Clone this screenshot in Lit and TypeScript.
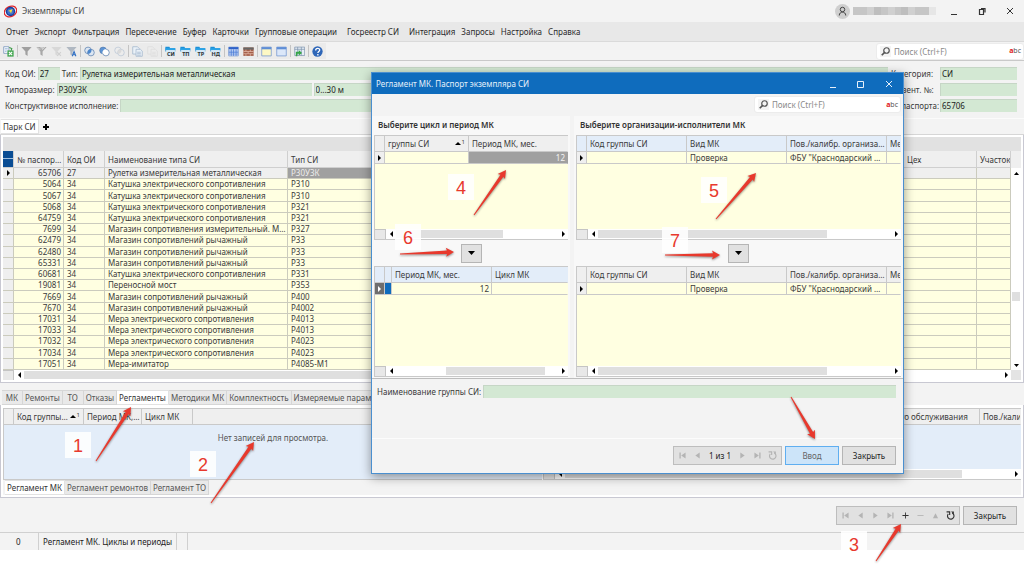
import { LitElement, html, svg, css, nothing, TemplateResult } from "lit";
import { customElement, property } from "lit/decorators.js";
import { classMap } from "lit/directives/class-map.js";
import { styleMap } from "lit/directives/style-map.js";

const base = css`
  *, *::before, *::after { box-sizing: border-box; }
  button, input {
    font: inherit;
    color: inherit;
    border: 0;
    margin: 0;
    padding: 0;
    background: none;
    border-radius: 0;
    min-width: 0;
  }
  svg { display: block; }
`;

/* ---------- glyphs ---------- */

const funnel = (fill: string) => svg`<path d="M1 3h28L18 15v12l-6-4v-8z" fill=${fill}/>`;
const folder = (text: string) => svg`
  <path d="M1 2h11l2 4h14v9H1z" fill="#1d8fd6"/><path d="M3 9h24v19H3z" fill="#d5e9f6"/>
  <path d="M1 6h27v5H1z" fill="#2aa3e6"/>
  <text x="16" y="28" text-anchor="middle" font-size="15" font-weight="700" fill="#333">${text}</text>`;
const sheet = (fill: string, bar: string) => svg`
  <path d="M2 3h26v24H2z" fill=${fill} stroke="#6f93cf" stroke-width="2"/><path d="M2 3h26v6H2z" fill=${bar}/>`;
const rings = (a: string, b: string, mid: string) => svg`
  <circle cx="11" cy="12" r="9" fill=${a} stroke="#5a7fae" stroke-width="2"/>
  <circle cx="19" cy="18" r="9" fill=${b} stroke="#5a7fae" stroke-width="2"/>
  <path d="M20 9a9 9 0 0 0-10 12a9 9 0 0 0 10-12z" fill=${mid}/>`;
const pages = (fill: string, line: string) => svg`
  <path d="M2 2h13l5 5v15H2z" fill=${fill} stroke=${line} stroke-width="2"/>
  <path d="M11 9h12l5 5v14H11z" fill=${fill} stroke=${line} stroke-width="2"/>
  <path d="M14 17h10M14 21h10M14 25h10" stroke=${line} stroke-width="2"/>`;

const toolGroups: { title: string; art: TemplateResult<2> }[][] = [
  [{ title: "Экспорт", art: svg`
      <path d="M2 2h14v18H2z" fill="#fff" stroke="#6b8cb5" stroke-width="2"/><path d="M5 7h8M5 11h8M5 15h5" stroke="#8fb0d8" stroke-width="2"/>
      <path d="M17 4l7 3-2 6" fill="none" stroke="#3b9a46" stroke-width="3"/>
      <path d="M12 12h17v17H12z" fill="#43a651"/><path d="M16 16l9 9M25 16l-9 9" stroke="#fff" stroke-width="3"/>` }],
  [
    { title: "Фильтр", art: funnel("#a0a0a0") },
    { title: "Мультифильтр", art: svg`${funnel("#a8a8a8")}<path d="M5 4l6 6M16 10l8-7M12 5h8" stroke="#f4f4f4" stroke-width="2"/>` },
    { title: "Снять фильтр", art: svg`${funnel("#d8d8d8")}<path d="M17 17l10 10M27 17L17 27" stroke="#cfcfcf" stroke-width="3"/>` },
    { title: "Автофильтр", art: svg`${funnel("#b0b8c2")}<path d="M17 28l5-13 5 13M19 24h6" fill="none" stroke="#2f6fc4" stroke-width="3"/>` },
  ],
  [
    { title: "Пересечение", art: rings("#dce6f2", "#dce6f2", "#4b86cc") },
    { title: "Разность", art: rings("#5c94d6", "#ffffff", "#ffffff") },
    { title: "Сброс", art: svg`<g opacity=".35">${rings("#eeeeee", "#eeeeee", "#bbbbbb")}</g>` },
  ],
  [
    { title: "Копировать", art: pages("#eaf1f8", "#9fb4cb") },
    { title: "Вставить", art: pages("#ececec", "#dcdcdc") },
  ],
  [
    { title: "СИ", art: folder("СИ") },
    { title: "ТП", art: folder("ТП") },
    { title: "ТР", art: folder("ТР") },
    { title: "НД", art: folder("НД") },
  ],
  [
    { title: "Таблица", art: svg`${sheet("#dfe9fb", "#2f62c8")}<path d="M2 14h26M2 18h26M2 22h26M9 9v18M15 9v18M22 9v18" stroke="#4a7bd6" stroke-width="2"/>` },
    { title: "Журнал", art: svg`<path d="M1 4h28v23H1z" fill="#a5604b"/><path d="M1 4h28v6H1z" fill="#666"/><path d="M1 15h28M1 21h28M8 10v5M20 10v5M14 15v6M8 21v6M20 21v6" stroke="#e4b9a9" stroke-width="2"/>` },
  ],
  [
    { title: "Карточка", art: sheet("#fdf8c4", "#5f8ed6") },
    { title: "Форма", art: sheet("#dbe7f9", "#5f8ed6") },
  ],
  [{ title: "Переход", art: svg`<path d="M2 3h27v23H2z" fill="#e6eef6" stroke="#7d93ad" stroke-width="2"/><path d="M2 9h27M10 3v23M20 3v23" stroke="#7d93ad" stroke-width="2"/><path d="M5 28V16h8v-5l9 8-9 7v-5H9v7z" fill="#35a547"/>` }],
  [{ title: "Помощь", art: svg`<circle cx="15" cy="15" r="14" fill="#2e66b8"/><path d="M10 12c0-7 11-7 11-1 0 4-5 4-5 8M16 22v4" fill="none" stroke="#fff" stroke-width="3.5"/>` }],
];

const navArt: Record<string, TemplateResult<2>> = {
  first: svg`<path d="M1 1h3v14H1zM15 1v14L5 8z"/>`,
  prev: svg`<path d="M13 1v14L3 8z"/>`,
  next: svg`<path d="M3 1v14l10-7z"/>`,
  last: svg`<path d="M12 1h3v14h-3zM1 1v14l10-7z"/>`,
  add: svg`<path d="M7 1h2v6h6v2H9v6H7V9H1V7h6z"/>`,
  remove: svg`<path d="M1 7h14v2H1z"/>`,
  edit: svg`<path d="M2 14h12L8 3z"/>`,
  refresh: svg`<path d="M4 5a5.800 5.800 0 1 0 7-1.500M1 1.500h5.500V7" fill="none" stroke="currentColor" stroke-width="2"/><path d="M9 1h5v5z"/>`,
};
const navTitle: Record<string, string> = {
  first: "Первая", prev: "Предыдущая", next: "Следующая", last: "Последняя",
  add: "Добавить", remove: "Удалить", edit: "Изменить", refresh: "Обновить",
};

/* ---------- search box ---------- */

@customElement("search-box")
export class SearchBox extends LitElement {
  static styles = [base, css`
    :host {
      display: flex; align-items: center; gap: 3px; height: 17px; padding: 0 2px 0 3px;
      background: #fff; border-radius: 3px; border: 1px solid #ececec;
    }
    .lens { width: 11px; height: 11px; background: #f4f4f4; padding: 1px; flex: none; }
    .field { flex: 1; outline: 0; height: 13px; }
    .field::placeholder { color: #8a8a8a; opacity: 1; }
    .abc { font-size: 7px; color: #555; }
    .abc b { color: #e02020; }
  `];
  render() {
    return html`
      <svg class="lens" viewBox="0 0 18 18"><circle cx="11" cy="7" r="5.500" fill="none" stroke="#555" stroke-width="2.400"/><path d="M7.500 10.500L1.500 16.500" stroke="#555" stroke-width="3.500"/></svg>
      <input class="field" type="search" aria-label="Поиск" placeholder="Поиск (Ctrl+F)">
      <span class="abc"><b>a</b>bc</span>`;
  }
}

/* ---------- record navigator ---------- */

@customElement("record-nav")
export class RecordNav extends LitElement {
  @property({ attribute: false }) items: string[] = [];
  @property({ attribute: false }) enabled: string[] = [];
  @property() counter = "";
  static styles = [base, css`
    :host {
      display: flex; align-items: center; height: 19px; padding: 0 1px;
      background: #e1e1e1; border: 1px solid #bdbdbd;
    }
    .btn { width: 15px; height: 17px; display: grid; place-items: center; color: #b4b4b4; }
    .btn.on { color: #333; }
    .btn svg { width: 7px; height: 7px; fill: currentColor; }
    .btn.big svg { width: 9px; height: 9px; }
    .count { width: 30px; text-align: center; color: #222; }
  `];
  render() {
    return this.items.map((id) =>
      id === "count"
        ? html`<span class="count">${this.counter}</span>`
        : html`<button
            class=${classMap({ btn: true, on: this.enabled.includes(id), big: id === "refresh" })}
            aria-label=${navTitle[id]}
            ?disabled=${!this.enabled.includes(id)}
          ><svg viewBox="0 0 16 16">${navArt[id]}</svg></button>`);
  }
}

/* ---------- horizontal scroll bar ---------- */

@customElement("h-scroll")
export class HScroll extends LitElement {
  @property({ type: Number }) start = 0;
  @property({ type: Number }) size = 100;
  static styles = [base, css`
    :host { display: flex; height: 10px; background: #fff; }
    .box { width: 11px; background: #e8e8e8; border-right: 1px solid #c4c4c4; border-top: 1px solid #c4c4c4; }
    .arrow { width: 10px; display: grid; place-items: center; }
    .arrow svg { width: 3px; height: 6px; }
    .track { flex: 1; padding: 1px 0; }
    .thumb { height: 8px; background: #dfdfdf; }
  `];
  render() {
    return html`
      <span class="box"></span>
      <button class="arrow" aria-label="Влево"><svg viewBox="0 0 3 6"><path d="M3 0v6L0 3z"/></svg></button>
      <div class="track"><div class="thumb" style=${styleMap({ marginLeft: `${this.start}%`, width: `${this.size}%` })}></div></div>
      <button class="arrow" aria-label="Вправо"><svg viewBox="0 0 3 6"><path d="M0 0v6l3-3z"/></svg></button>`;
  }
}

/* ---------- data grid of the dialog and of the lower pane ---------- */

interface Col { title: string; width?: number; sorted?: boolean; }
interface Cell { text: string; num?: boolean; focus?: boolean; mark?: boolean; }

@customElement("data-grid")
export class DataGrid extends LitElement {
  @property({ attribute: false }) cols: Col[] = [];
  @property({ attribute: false }) row?: Cell[];
  @property({ type: Boolean }) blue = false;
  @property({ type: Boolean }) picked = false;
  @property() empty = "";
  static styles = [base, css`
    :host { display: flex; flex-direction: column; min-width: 0; overflow: hidden; border: 1px solid #c9c9c9; border-width: 1px 0 1px 1px; background: #ffffe1; }
    :host([data-tone="sky"]) { background: #e3edf9; }
    table { width: 100%; table-layout: fixed; border-collapse: separate; border-spacing: 0; }
    th, td {
      padding: 0 1px 0 3px; font-weight: 400; text-align: left; white-space: nowrap;
      overflow: hidden; text-overflow: ellipsis; border-right: 1px solid #c9c9c9; border-bottom: 1px solid #c9c9c9;
    }
    th:last-child, td:last-child { border-right-color: transparent; text-overflow: clip; }
    th { height: 16px; background: #efefef; line-height: 14px; }
    td { height: 12px; line-height: 11px; }
    .blue th { background: #e3edf9; }
    .ind { width: 10px; padding: 0; background: #efefef; }
    .ind svg { width: 3px; height: 6px; margin: auto; }
    .picked { background: #6e6e6e; }
    .picked path { fill: #fff; }
    .num { text-align: right; padding-right: 2px; }
    .focus { background: #a0a0a0; color: #f4f4f4; }
    .mark { background: #0f6cbd; }
    .sort { display: flex; align-items: center; gap: 1px; padding-right: 2px; }
    .sort span { flex: 1; min-width: 0; overflow: hidden; text-overflow: ellipsis; }
    .sort svg { width: 6px; height: 3px; }
    sup { font-size: 6px; line-height: 10px; align-self: flex-start; vertical-align: top; }
    .none { margin: 7px 0 0; text-align: center; color: #555; line-height: 12px; }
    .fill { flex: 1; }
  `];
  render() {
    return html`
      <table class=${classMap({ blue: this.blue })}>
        <colgroup><col class="ind">${this.cols.map((c) => html`<col style=${c.width ? `width:${c.width}px` : nothing}>`)}</colgroup>
        <thead><tr><th class="ind"></th>${this.cols.map((c) => html`<th>${c.sorted
          ? html`<div class="sort"><span>${c.title}</span><svg viewBox="0 0 6 3"><path d="M0 3h6L3 0z"/></svg><sup>1</sup></div>`
          : c.title}</th>`)}</tr></thead>
        ${this.row ? html`<tbody><tr>
          <td class=${classMap({ ind: true, picked: this.picked })}><svg viewBox="0 0 3 6"><path d="M0 0v6l3-3z"/></svg></td>
          ${this.row.map((c) => html`<td class=${classMap({ num: !!c.num, focus: !!c.focus, mark: !!c.mark })}>${c.text}</td>`)}
        </tr></tbody>` : nothing}
      </table>
      ${this.empty ? html`<p class="none">${this.empty}</p>` : nothing}
      <div class="fill"></div>
      <slot></slot>`;
  }
}

/* ---------- modal window ---------- */

const orgCols: Col[] = [
  { title: "Код группы СИ", width: 100 },
  { title: "Вид МК", width: 100 },
  { title: "Пов./калибр. организация", width: 100 },
  { title: "Место" },
];
const orgRow: Cell[] = [{ text: "" }, { text: "Проверка" }, { text: "ФБУ \"Краснодарский ЦСМ\"" }, { text: "" }];

@customElement("schedule-dialog")
export class ScheduleDialog extends LitElement {
  static styles = [base, css`
    :host {
      display: flex; flex-direction: column; background: #f3f3f3;
      border: 1px solid #4a8fcf; box-shadow: 0 3px 10px rgba(0, 0, 0, 0.4);
    }
    .title { display: flex; align-items: center; height: 21px; background: #0f6cbd; color: #e6f0fa; padding: 0 0 0 4px; }
    .title h2 { flex: 1; margin: 0; font-size: 8px; font-weight: 400; }
    .win { width: 28px; height: 21px; display: grid; place-items: center; }
    .win svg { width: 8px; height: 8px; fill: none; stroke: #e6f0fa; }
    .search { display: flex; justify-content: flex-end; height: 22px; padding: 2px 2px 0; }
    .search search-box { width: 147px; }
    .panes { display: grid; grid-template-columns: 198px 1fr; gap: 4px; border-bottom: 1px solid #bdbdbd; }
    .pane { background: #f8f8f8; padding: 0 2px 1px; display: flex; flex-direction: column; min-width: 0; }
    .pane h3 { margin: 0; height: 19px; line-height: 18px; padding-left: 4px; font-size: 8px; font-weight: 600; color: #333; }
    data-grid { height: 105px; }
    .second { height: 111px; }
    .mid { height: 26px; display: grid; place-items: center; }
    .move { width: 21px; height: 19px; background: #e1e1e1; border: 1px solid #b5b5b5; display: grid; place-items: center; }
    .move svg { width: 7px; height: 4px; }
    .group { display: flex; align-items: flex-start; gap: 2px; padding: 6px 7px 0 5px; height: 60px; border-bottom: 1px solid #fcfcfc; }
    .group label { line-height: 13px; white-space: nowrap; }
    .group input { flex: 1; height: 13px; background: #d3e8d3; border: 1px solid #c6d6c6; border-width: 1px 0 0 1px; }
    .foot { display: flex; justify-content: flex-end; gap: 3px; padding: 7px 7px 8px; }
    .btn { width: 54px; height: 19px; background: #e1e1e1; border: 1px solid #b5b5b5; color: #222; }
    .main { background: #cce4f9; border-color: #5faef0; color: #666; }
  `];
  private arrow(label: string) {
    return html`<div class="mid"><button class="move" aria-label=${label}><svg viewBox="0 0 7 4"><path d="M0 0h7L3.500 4z"/></svg></button></div>`;
  }
  render() {
    return html`
      <header class="title"><h2>Регламент МК. Паспорт экземпляра СИ</h2>
        <button class="win" aria-label="Свернуть"><svg viewBox="0 0 8 8"><path d="M1 7.500h6"/></svg></button>
        <button class="win" aria-label="Развернуть"><svg viewBox="0 0 8 8"><path d="M.5 1.500h6v6h-6z"/></svg></button>
        <button class="win" aria-label="Закрыть окно"><svg viewBox="0 0 8 8"><path d="M1 1l6 6M7 1L1 7"/></svg></button>
      </header>
      <div class="search"><search-box></search-box></div>
      <div class="panes">
        <section class="pane">
          <h3>Выберите цикл и период МК</h3>
          <data-grid
            .cols=${[{ title: "группы СИ", width: 84, sorted: true }, { title: "Период МК, мес." }]}
            .row=${[{ text: "" }, { text: "12", num: true, focus: true }]}
          ><h-scroll .start=${0} .size=${66}></h-scroll></data-grid>
          ${this.arrow("Добавить период")}
          <data-grid class="second" blue picked
            .cols=${[{ title: "", width: 7 }, { title: "Период МК, мес.", width: 100 }, { title: "Цикл МК" }]}
            .row=${[{ text: "", mark: true }, { text: "12", num: true }, { text: "" }]}
          ><h-scroll .start=${31} .size=${61}></h-scroll></data-grid>
        </section>
        <section class="pane">
          <h3>Выберите организации-исполнители МК</h3>
          <data-grid blue .cols=${orgCols} .row=${orgRow}><h-scroll .start=${0} .size=${78}></h-scroll></data-grid>
          ${this.arrow("Добавить организацию")}
          <data-grid class="second" .cols=${orgCols} .row=${orgRow}><h-scroll .start=${0} .size=${78}></h-scroll></data-grid>
        </section>
      </div>
      <div class="group"><label for="group">Наименование группы СИ:</label><input id="group" readonly></div>
      <footer class="foot">
        <record-nav .items=${["first", "prev", "count", "next", "last", "refresh"]} counter="1 из 1"></record-nav>
        <button class="btn main">Ввод</button>
        <button class="btn">Закрыть</button>
      </footer>`;
  }
}

/* ---------- numbered hints ---------- */

const hints = [
  { n: 1, x: 65, y: 432 }, { n: 2, x: 190, y: 451 }, { n: 3, x: 841, y: 531 }, { n: 4, x: 448, y: 174 },
  { n: 5, x: 701, y: 177 }, { n: 6, x: 395, y: 224 }, { n: 7, x: 662, y: 227 },
];
const arrows = [
  [96, 461, 131, 407], [211, 503, 254, 442], [876, 561, 901, 524], [474, 215, 506, 170],
  [716, 219, 756, 173], [400, 254, 454, 252], [665, 255, 720, 255], [791, 397, 815, 439],
];

function arrowPath([x1, y1, x2, y2]: number[]): string {
  const len = Math.hypot(x2 - x1, y2 - y1);
  const ux = (x2 - x1) / len, uy = (y2 - y1) / len;
  const at = (d: number, s: number) => `${(x1 + ux * d - uy * s).toFixed(1)} ${(y1 + uy * d + ux * s).toFixed(1)}`;
  return `M${at(0, 0.5)}L${at(len - 7, 1.8)}L${at(len - 8, 4.5)}L${at(len, 0)}L${at(len - 8, -4.5)}L${at(len - 7, -1.8)}L${at(0, -0.5)}Z`;
}

@customElement("hint-layer")
export class HintLayer extends LitElement {
  static styles = [base, css`
    :host { display: block; }
    svg { width: 100%; height: 100%; filter: drop-shadow(0 1px 1px rgba(0, 0, 0, 0.45)); }
    .n {
      position: absolute; width: 26px; height: 26px; line-height: 28px; text-align: center;
      background: rgba(255, 255, 255, 0.86); color: #e8392d; font-family: "Liberation Sans", sans-serif; font-size: 18px;
    }
  `];
  render() {
    return html`
      ${hints.map((h) => html`<span class="n" style=${styleMap({ left: `${h.x}px`, top: `${h.y}px` })}>${h.n}</span>`)}
      <svg>${arrows.map((a) => svg`<path d=${arrowPath(a)} fill="#e8392d"/>`)}</svg>`;
  }
}

/* ---------- main window ---------- */

const menu = [
  ["Отчет", "Экспорт", "Фильтрация", "Пересечение", "Буфер", "Карточки", "Групповые операции"],
  ["Госреестр СИ"],
  ["Интеграция", "Запросы", "Настройка", "Справка"],
];

const coil = "Катушка электрического сопротивления";
const box = "Магазин сопротивлений рычажный";
const measure = "Мера электрического сопротивления";
const stock: [string, string, string, string][] = [
  ["65706", "27", "Рулетка измерительная металлическая", "Р30УЗК"],
  ["5064", "34", coil, "Р310"],
  ["5067", "34", coil, "Р310"],
  ["5068", "34", coil, "Р321"],
  ["64759", "34", coil, "Р321"],
  ["7699", "34", "Магазин сопротивления измерительный. Магазин", "Р327"],
  ["62479", "34", box, "Р33"],
  ["62480", "34", box, "Р33"],
  ["65331", "34", box, "Р33"],
  ["60681", "34", coil, "Р331"],
  ["19081", "34", "Переносной мост", "Р353"],
  ["7669", "34", box, "Р400"],
  ["7670", "34", box, "Р4002"],
  ["17031", "34", measure, "Р4013"],
  ["17033", "34", measure, "Р4013"],
  ["17032", "34", measure, "Р4023"],
  ["17034", "34", measure, "Р4023"],
  ["17051", "34", "Мера-имитатор", "Р4085-М1"],
];

const detailTabs = ["МК", "Ремонты", "ТО", "Отказы", "Регламенты", "Методики МК", "Комплектность", "Измеряемые параметры"];
const planTabs = ["Регламент МК", "Регламент ремонтов", "Регламент ТО"];

@customElement("app-root")
export class AppRoot extends LitElement {
  static styles = [base, css`
    :host {
      display: block; position: relative; min-height: 100vh; overflow: hidden; background: #fff;
      font: 8px/12px "Noto Sans", "Open Sans", sans-serif; color: #3a3a3a;
    }
    .window { background: #f3f3f3; display: flex; flex-direction: column; }

    .title { display: flex; align-items: center; height: 22px; padding-left: 4px; }
    .title h1 { flex: 1; margin: 0 0 0 5px; font-size: 8px; font-weight: 400; color: #444; }
    .logo { width: 13px; height: 13px; }
    .avatar { width: 15px; height: 15px; }
    .mosaic { display: flex; width: 83px; height: 8px; margin: 0 4px 0 3px; }
    .mosaic i { flex: 1; background: #c6c6c6; }
    .mosaic i:nth-child(3n) { background: #d0d0d0; }
    .mosaic i:nth-child(4n) { background: #bebebe; }
    .mosaic i:last-child { background: #e6e6e6; }
    .win { width: 28px; height: 20px; display: grid; place-items: center; }
    .win svg { width: 8px; height: 8px; fill: none; stroke: #333; }

    .menu { display: flex; gap: 4px; height: 20px; padding-left: 3px; background: #e8e8e8; border-bottom: 1px solid #dadada; }
    .menu div { display: flex; }
    .menu button { padding: 0 3px; color: #2a2a2a; }

    .bar { display: flex; align-items: center; height: 19px; border-bottom: 1px solid #c9c9c9; }
    .tools { display: flex; align-items: center; height: 16px; padding: 0 1px; background: #ebebeb; }
    .tools div { display: flex; }
    .tools div + div { border-left: 1px solid #c4c4c4; margin-left: 1px; padding-left: 1px; }
    .tool { width: 15px; height: 12px; display: grid; place-items: center; }
    .tool svg { width: 11px; height: 11px; }
    .bar search-box { width: 148px; margin-left: auto; }

    .form { display: grid; grid-template-columns: 1fr 49px 77px; gap: 3px 0; padding: 6px 7px 6px 5px; border-bottom: 1px solid #fbfbfb; }
    .line { display: flex; gap: 2px; align-items: center; padding-right: 3px; }
    .form label { white-space: nowrap; line-height: 13px; }
    .form input { height: 13px; width: 100%; padding: 0 1px 1px; background: #d3e8d3; border: 1px solid #c6d6c6; border-width: 1px 0 0 1px; color: #222; }
    .form .grow { flex: 1; }
    .form .code { width: 22px; }
    .form .size { width: 255px; }

    .tabs { display: flex; }
    .tab { height: 15px; min-width: 21px; padding: 0 2px; background: #e9e9e9; border: 1px solid #d6d6d6; border-left-width: 0; color: #555; white-space: nowrap; }
    .tab.on { background: #fff; border-color: #e2e2e2; color: #333; }
    .park { padding-left: 1px; border-bottom: 1px solid #d6d6d6; }
    .plus { width: 15px; display: grid; place-items: center; }
    .plus svg { width: 6px; height: 6px; }

    .panel { background: #fff; border: 1px solid #c8c8d2; border-top: 0; padding: 2px 2px 2px; }
    .band { height: 14px; background: #e1e1e1; }
    .sheet { display: grid; grid-template-columns: 1fr 10px; }
    .stock { width: 100%; height: 219px; table-layout: fixed; border-collapse: separate; border-spacing: 0; background: #ffffe1; }
    .stock th, .stock td {
      padding: 0 1px 0 3px; font-weight: 400; text-align: left; white-space: nowrap; line-height: 10px;
      overflow: hidden; text-overflow: ellipsis; border-right: 1px solid #cbcbbd; border-bottom: 1px solid #cbcbbd;
    }
    .stock th { height: 17px; padding-top: 1px; background: #efefef; border-color: #cfcfcf; }
    .stock .ind { width: 11px; padding: 0; background: #efefef; }
    .stock th.ind { background: linear-gradient(#0a4d94 7px, #9fbfe0 7px, #9fbfe0 8px, #0a4d94 8px); }
    .stock th.area { padding-right: 0; text-overflow: clip; }
    .ind svg { width: 3px; height: 6px; margin: auto; }
    .c-no { width: 50px; } .c-code { width: 41px; } .c-name { width: 183px; } .c-type { width: 110px; }
    .c-shop { width: 73px; } .c-area { width: 34px; }
    .stock td.no { text-align: right; padding-right: 2px; }
    .cur td { background: #efefef; }
    .cur td.type { background: #a0a0a0; color: #ededed; }
    .vscroll { display: flex; flex-direction: column; padding-top: 17px; background: linear-gradient(#efefef 17px, #fff 17px); }
    .vscroll button { height: 10px; display: grid; place-items: center; }
    .vscroll svg { width: 5px; height: 3px; }
    .vtrack { flex: 1; padding: 0 1px; }
    .vthumb { height: 9px; background: #dfdfdf; }
    .hrow { display: grid; grid-template-columns: 1fr 10px; }
    .corner { background: #e4e4e4; }

    .details { padding: 7px 0 0; }
    .details > .tabs { padding-left: 2px; }
    .details > .panel { padding-top: 3px; }
    .plan { display: grid; grid-template-columns: 539px 1fr; gap: 1px; }
    .plan data-grid { height: 72px; }
    .low { padding-left: 2px; background: #f3f3f3; }

    .foot { display: flex; justify-content: flex-end; gap: 3px; padding: 8px 7px 7px; border-bottom: 1px solid #d0d0d0; }
    .btn { width: 54px; height: 19px; background: #e1e1e1; border: 1px solid #b5b5b5; color: #222; }
    .status { display: flex; height: 17px; align-items: stretch; line-height: 18px; color: #222; }
    .status span { border-right: 1px solid #d0d0d0; padding: 0 4px; }
    .status .num { width: 39px; padding: 0 0 0 16px; }
    .status .gap { width: 11px; padding: 0; }

    schedule-dialog { position: absolute; left: 371px; top: 72px; width: 533px; }
    hint-layer { position: absolute; inset: 0; pointer-events: none; }
  `];

  private tab(name: string, active: string) {
    return html`<button class=${classMap({ tab: true, on: name === active })}>${name}</button>`;
  }

  render() {
    return html`
      <main class="window">
        <header class="title">
          <svg class="logo" viewBox="0 0 26 26">
            <ellipse cx="13" cy="13" rx="13" ry="10" transform="rotate(-28 13 13)" fill="none" stroke="#e2262b" stroke-width="2.500"/>
            <circle cx="13" cy="13" r="9.500" fill="#1b3f9c"/><circle cx="13" cy="13" r="6.500" fill="#3f74d0"/>
            <path d="M8 12l9-4-3 9-2-4z" fill="#f4e13a"/>
          </svg>
          <h1>Экземпляры СИ</h1>
          <svg class="avatar" viewBox="0 0 30 30"><circle cx="15" cy="15" r="15" fill="#cfcfcf"/><g fill="none" stroke="#444" stroke-width="2"><circle cx="15" cy="11" r="4.500"/><path d="M8.500 23c0-9 13-9 13 0"/></g></svg>
          <span class="mosaic">${Array.from({ length: 12 }, () => html`<i></i>`)}</span>
          <button class="win" aria-label="Свернуть"><svg viewBox="0 0 8 8"><path d="M1 7.500h6"/></svg></button>
          <button class="win" aria-label="Восстановить"><svg viewBox="0 0 8 8"><path d="M1.500 2.500h4v5h-4zM3 1.500h4v4" stroke-width="1.200"/></svg></button>
          <button class="win" aria-label="Закрыть окно"><svg viewBox="0 0 8 8"><path d="M1 1l6 6M7 1L1 7"/></svg></button>
        </header>

        <nav class="menu">${menu.map((g) => html`<div>${g.map((m) => html`<button>${m}</button>`)}</div>`)}</nav>

        <div class="bar">
          <div class="tools">${toolGroups.map((g) => html`<div>${g.map((t) => html`
            <button class="tool" aria-label=${t.title}><svg viewBox="0 0 30 30">${t.art}</svg></button>`)}</div>`)}</div>
          <search-box></search-box>
        </div>

        <form class="form">
          <div class="line">
            <label for="code">Код ОИ:</label><input id="code" class="code" readonly value="27">
            <label for="kind">Тип:</label><input id="kind" class="grow" readonly value="Рулетка измерительная металлическая">
          </div>
          <label for="cat">Категория:</label><input id="cat" readonly value="СИ">
          <div class="line">
            <label for="size">Типоразмер:</label><input id="size" class="size" readonly value="Р30УЗК">
            <input class="grow" aria-label="Диапазон" readonly value="0...30 м">
          </div>
          <label for="inv">Инвент. №:</label><input id="inv" readonly>
          <div class="line"><label for="make">Конструктивное исполнение:</label><input id="make" class="grow" readonly></div>
          <label for="pass">№ паспорта:</label><input id="pass" readonly value="65706">
        </form>

        <div class="tabs park">
          ${this.tab("Парк СИ", "Парк СИ")}
          <button class="plus" aria-label="Добавить вкладку"><svg viewBox="0 0 6 6"><path d="M2 0h2v2h2v2H4v2H2V4H0V2h2z"/></svg></button>
        </div>
        <section class="panel">
          <div class="band"></div>
          <div class="sheet">
            <table class="stock">
              <colgroup><col class="ind"><col class="c-no"><col class="c-code"><col class="c-name"><col class="c-type"><col><col class="c-shop"><col class="c-area"></colgroup>
              <thead><tr><th class="ind"></th><th>№ паспорта</th><th>Код ОИ</th><th>Наименование типа СИ</th><th>Тип СИ</th><th></th><th>Цех</th><th class="area">Участок</th></tr></thead>
              <tbody>${stock.map((r, i) => html`<tr class=${i ? "" : "cur"}>
                <td class="ind">${i ? nothing : html`<svg viewBox="0 0 3 6"><path d="M0 0v6l3-3z"/></svg>`}</td>
                <td class="no">${r[0]}</td><td>${r[1]}</td><td>${r[2]}</td><td class="type">${r[3]}</td><td></td><td></td><td></td>
              </tr>`)}</tbody>
            </table>
            <div class="vscroll">
              <button aria-label="Вверх"><svg viewBox="0 0 5 3"><path d="M0 3h5L2.500 0z"/></svg></button>
              <div class="vtrack"><div class="vthumb" style=${styleMap({ marginTop: "114px" })}></div></div>
              <button aria-label="Вниз"><svg viewBox="0 0 5 3"><path d="M0 0h5L2.500 3z"/></svg></button>
            </div>
          </div>
          <div class="hrow"><h-scroll .start=${0} .size=${50}></h-scroll><span class="corner"></span></div>
        </section>

        <section class="details">
          <div class="tabs">${detailTabs.map((t) => this.tab(t, "Регламенты"))}</div>
          <div class="panel">
            <div class="plan">
              <data-grid data-tone="sky" empty="Нет записей для просмотра."
                .cols=${[{ title: "Код группы СИ", width: 70, sorted: true }, { title: "Период МК, мес.", width: 58 }, { title: "Цикл МК", width: 51 }, { title: "" }]}
              ></data-grid>
              <data-grid data-tone="sky"
                .cols=${[{ title: "" }, { title: "Место обслуживания", width: 98 }, { title: "Пов./калибр. организация", width: 41 }]}
              ><h-scroll .start=${0} .size=${89}></h-scroll></data-grid>
            </div>
            <div class="tabs low">${planTabs.map((t) => this.tab(t, "Регламент МК"))}</div>
          </div>
        </section>

        <footer class="foot">
          <record-nav
            .items=${["first", "prev", "next", "last", "add", "remove", "edit", "refresh"]}
            .enabled=${["add", "refresh"]}
          ></record-nav>
          <button class="btn">Закрыть</button>
        </footer>
        <div class="status"><span class="num">0</span><span>Регламент МК. Циклы и периоды</span><span class="gap"></span></div>
      </main>

      <schedule-dialog role="dialog" aria-label="Регламент МК"></schedule-dialog>
      <hint-layer></hint-layer>`;
  }
}
